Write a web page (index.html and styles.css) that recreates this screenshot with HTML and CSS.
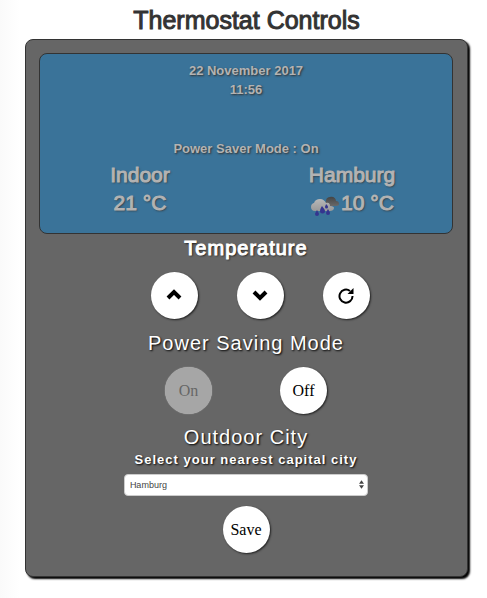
FILE: index.html
```html
<!DOCTYPE html>
<html lang="en">
<head>
<meta charset="utf-8">
<meta name="viewport" content="width=device-width, initial-scale=1">
<title>Thermostat Controls</title>
<link rel="stylesheet" href="styles.css">
</head>
<body>
<main class="page">
  <h1 class="title">Thermostat Controls</h1>
  <div class="panel">
    <section class="screen">
      <p class="line">22 November 2017</p>
      <p class="line">11:56</p>
      <p class="line mode">Power Saver Mode : On</p>
      <div class="readings">
        <div class="reading">
          <div>Indoor</div>
          <div>21 °C</div>
        </div>
        <div class="reading">
          <div>Hamburg</div>
          <div class="outdoor">
            <svg class="weather" viewBox="0 0 30 20" aria-hidden="true">
              <defs>
                <linearGradient id="dark" x1="0" y1="0" x2="0" y2="1"><stop offset="0" stop-color="#444"/><stop offset="1" stop-color="#686868"/></linearGradient>
                <linearGradient id="light" x1="0" y1="0" x2="0" y2="1"><stop offset="0" stop-color="#b8b8b8"/><stop offset="1" stop-color="#999"/></linearGradient>
              </defs>
              <path fill="url(#dark)" d="M16 5c0-3 2-4 4-4 3-1 6 1 6 4 2 0 3 1 3 3 0 1-1 2-3 2h-6c-3 0-5-2-4-5z"/>
              <path fill="url(#light)" d="M5 15c-3 0-4-2-4-4 0-3 2-4 3-4 1-3 3-4 6-4 3 0 5 2 6 4 3-1 4 1 4 3 3 0 4 1 4 2 0 2-2 3-4 3z"/>
              <g fill="#35358f">
                <path d="M7 14c1 2 2 3 2 4a2 2 0 0 1-4 0c0-1 1-2 2-4z"/>
                <path d="M12 10c1 2 3 3 3 5a2.500 2.500 0 0 1-5 0c0-2 1-3 2-5z"/>
                <path d="M16 8c1 1 2 2 2 3a1.500 1.500 0 0 1-3 0c0-1 1-2 1-3z"/>
                <path d="M18 13c1 2 2 3 2 4a2 2 0 0 1-4 0c0-1 1-2 2-4z"/>
              </g>
            </svg>
            <span>10 °C</span>
          </div>
        </div>
      </div>
    </section>

    <h2 class="heading strong">Temperature</h2>
    <div class="buttons temperature">
      <button class="round" type="button" aria-label="Increase temperature">
        <svg class="icon" viewBox="0 0 16 16"><path d="M2 10l6-6 6 6" fill="none" stroke="#000" stroke-width="4"/></svg>
      </button>
      <button class="round" type="button" aria-label="Decrease temperature">
        <svg class="icon" viewBox="0 0 16 16"><path d="M2 4l6 6 6-6" fill="none" stroke="#000" stroke-width="4"/></svg>
      </button>
      <button class="round" type="button" aria-label="Reset temperature">
        <svg class="icon" viewBox="0 0 16 16"><path d="M12 3A6.500 6.500 0 1 0 14.500 8" fill="none" stroke="#000" stroke-width="2"/><path d="M15.500 0v6H9.500z"/></svg>
      </button>
    </div>

    <h2 class="heading">Power Saving Mode</h2>
    <div class="buttons saving">
      <button class="round" type="button" disabled>On</button>
      <button class="round" type="button">Off</button>
    </div>

    <h2 class="heading">Outdoor City</h2>
    <form class="city">
      <label class="label" for="city">Select your nearest capital city</label>
      <div class="field">
        <select class="select" id="city">
          <option>Hamburg</option>
        </select>
        <svg class="arrows" viewBox="0 0 6 10" aria-hidden="true"><path fill="#444" d="M3 0l3 4H0zM3 10L0 6h6z"/></svg>
      </div>
      <button class="round" type="button">Save</button>
    </form>
  </div>
</main>
</body>
</html>
```

FILE: styles.css
```css
* {
  box-sizing: border-box;
}

body {
  margin: 0;
  background: linear-gradient(to right, #fafafa, #fff 20px);
  color: #333;
  font-family: "Liberation Sans", Arial, sans-serif;
}

.page {
  padding: 0 19px 20px 25px;
}

.title {
  margin: 0 0 4px;
  padding-top: 5px;
  font-size: 25px;
  font-weight: normal;
  line-height: 30px;
  text-align: center;
  -webkit-text-stroke: 1px #333;
}

.panel {
  padding: 13px 14px 23px 13px;
  border: 1px solid #333;
  border-radius: 8px;
  background: #666;
  box-shadow: 2px 2px 2px #000;
  color: #fff;
  text-align: center;
}

.screen {
  padding: 7px 0 16px;
  border: 1px solid #333;
  border-radius: 8px;
  background: #3a7399;
  color: #b3b3b3;
  text-shadow: 1px 1px 2px #333;
}

.line {
  margin: 0;
  font-size: 13px;
  font-weight: bold;
  line-height: 19px;
}

.mode {
  margin-top: 40px;
}

.readings {
  display: grid;
  grid-template-columns: 1fr 1fr;
  gap: 12px;
  margin-top: 3px;
}

.reading {
  font-size: 21px;
  line-height: 28px;
  -webkit-text-stroke: 1px #b3b3b3;
}

.outdoor {
  display: flex;
  align-items: center;
  justify-content: center;
  gap: 1px;
}

.weather {
  width: 30px;
  height: 20px;
  margin-top: 6px;
}

.heading {
  margin: 0;
  font-size: 20px;
  font-weight: normal;
  line-height: 28px;
  letter-spacing: 1px;
  text-shadow: 1px 1px 2px #000;
}

.strong {
  -webkit-text-stroke: 1px #fff;
}

.buttons {
  display: flex;
  justify-content: center;
}

.temperature {
  gap: 39px;
  padding: 10px 0 10px 28px;
}

.saving {
  gap: 68px;
  padding: 10px 0 9px;
}

.round {
  display: inline-flex;
  align-items: center;
  justify-content: center;
  width: 47px;
  height: 47px;
  padding: 0;
  border: 0;
  border-radius: 50%;
  background: #fff;
  box-shadow: 1px 1px 2px #222;
  color: #000;
  font-family: "Liberation Serif", "Times New Roman", serif;
  font-size: 16px;
}

.round:disabled {
  background: #a6a6a6;
  box-shadow: 0 0 1px #ccc;
  color: #666;
}

.icon {
  width: 16px;
  height: 16px;
}

.city {
  display: flex;
  flex-direction: column;
  align-items: center;
}

.label {
  font-size: 13px;
  font-weight: bold;
  line-height: 18px;
  letter-spacing: 1px;
  text-shadow: 1px 1px 2px #000;
}

.field {
  position: relative;
  width: 59%;
  margin: 5px 0 10px;
}

.select {
  display: block;
  width: 100%;
  height: 22px;
  padding: 0 5px;
  border: 1px solid #ccc;
  border-radius: 4px;
  appearance: none;
  background: #fff;
  color: #444;
  font-family: "Liberation Sans", Arial, sans-serif;
  font-size: 9px;
}

.arrows {
  position: absolute;
  top: 6px;
  right: 4px;
  width: 5px;
  height: 9px;
  pointer-events: none;
}
```
